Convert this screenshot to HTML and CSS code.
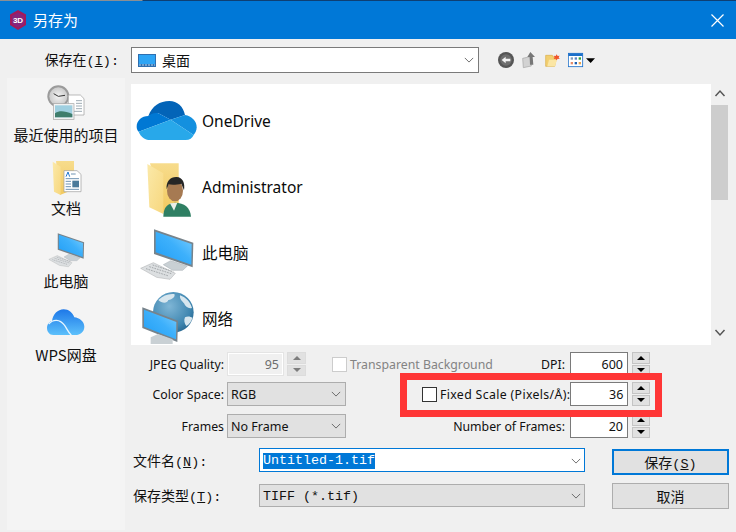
FILE: index.html
```html
<!DOCTYPE html>
<html lang="zh">
<head>
<meta charset="utf-8">
<title>另存为</title>
<link rel="stylesheet" href="styles.css">
</head>
<body>
<svg class="defs" width="0" height="0" aria-hidden="true">
  <defs>
    <linearGradient id="screen" x1="0" y1="1" x2="1" y2="0"><stop offset="0" stop-color="#1f9df5"/><stop offset=".55" stop-color="#3db0fb"/><stop offset="1" stop-color="#7fd0ff"/></linearGradient>
    <linearGradient id="folder" x1="0" y1="0" x2="0" y2="1"><stop offset="0" stop-color="#f7dc8c"/><stop offset="1" stop-color="#f2c95f"/></linearGradient>
    <linearGradient id="folderfront" x1="0" y1="0" x2="1" y2="1"><stop offset="0" stop-color="#fbe9a9"/><stop offset="1" stop-color="#f7d77e"/></linearGradient>
    <linearGradient id="wps" x1="0" y1="0" x2="0" y2="1"><stop offset="0" stop-color="#1e78e8"/><stop offset="1" stop-color="#5cc0fb"/></linearGradient>
    <radialGradient id="globe" cx=".4" cy=".35" r=".75"><stop offset="0" stop-color="#7fb6d6"/><stop offset=".7" stop-color="#3f86b0"/><stop offset="1" stop-color="#215f88"/></radialGradient>
    <radialGradient id="clockface" cx=".5" cy=".5" r=".6"><stop offset="0" stop-color="#f4f4f4"/><stop offset="1" stop-color="#c3c3c3"/></radialGradient>
    <g id="monitor">
      <polygon points="100,134 122,122 172,138 158,151 128,151" fill="#c9d0d4" stroke="#a3abb0" stroke-width="1.5"/>
      <polygon points="72,28 190,68 188,142 72,102" fill="#77838b"/>
      <polygon points="77,35 185,72 184,134 77,97" fill="url(#screen)"/>
      <polygon points="32,145 70,128 136,160 120,178 80,172" fill="#dcdfe1" stroke="#a6a9ab" stroke-width="1.5"/>
      <path d="M48 146 L116 168 M58 140 L124 161 M68 135 L130 155" stroke="#a4a8ab" stroke-width="3" stroke-dasharray="5 3" fill="none"/>
    </g>
  </defs>
</svg>

<div class="edge"></div>
<header class="titlebar">
  <svg class="app-icon" viewBox="0 0 18 20" aria-hidden="true">
    <polygon points="9,0 17,4.500 17,15 9,20 1,15 1,4.500" fill="#a3195b"/>
    <polygon points="9,2.500 15,6 15,14 9,17.500 3,14 3,6" fill="#86257c"/>
    <text x="9" y="13" class="app-icon-text" text-anchor="middle">3D</text>
  </svg>
  <span class="title-text">另存为</span>
  <svg class="close" viewBox="0 0 13 13" aria-hidden="true"><path d="M.5.5l12 12M12.500.5l-12 12" stroke="#fff" stroke-width="1.200" fill="none"/></svg>
</header>

<div class="toolbar">
  <label class="look-label">保存在<span class="mono">(<u>I</u>):</span></label>
  <div class="look-combo">
    <svg class="desk-icon" viewBox="0 0 18 13" aria-hidden="true"><rect width="18" height="13" fill="#2f6fb0"/><rect x="1" y="1" width="16" height="9" fill="#2ea5f5"/><path d="M1 11h16" stroke="#bcd9ee" stroke-dasharray="2 1"/></svg>
    <span class="look-text">桌面</span>
    <svg class="chev look-chev" viewBox="0 0 12 7" aria-hidden="true"><path d="M1 1l5 5 5-5" fill="none" stroke="#555" stroke-width="1"/></svg>
  </div>
  <div class="tools">
    <svg class="tool t-back" viewBox="174 150 51 54" aria-hidden="true">
      <circle cx="198" cy="177" r="24" fill="#555"/><circle cx="198" cy="177" r="17" fill="#6e6e6e"/>
      <path d="M185 177l12-10v6h14v8h-14v6z" fill="#f3f3f3"/>
    </svg>
    <svg class="tool t-up" viewBox="246 150 48 54" aria-hidden="true">
      <path d="M248 172l22-5 4 28-24 5z" fill="#d2d2d2" stroke="#a5a5a5" stroke-width="2"/>
      <path d="M271 153l14 15h-7l2 23h-10l-1-23h-7z" fill="#777"/>
    </svg>
    <svg class="tool t-new" viewBox="315 150 48 54" aria-hidden="true">
      <path d="M317 163h20l3 5h10l-6 28h-27z" fill="#f2cf70" stroke="#d9ad47" stroke-width="2"/>
      <path d="M322 196l5-20h24l-6 20z" fill="#fbe6a4"/>
      <path d="M350 160l3 5 6-1-3 5 3 5-6-1-3 5-3-5-6 1 3-5-3-5 6 1z" fill="#f0552b"/>
    </svg>
    <svg class="tool t-views" viewBox="384 150 84 54" aria-hidden="true">
      <rect x="385" y="157" width="43" height="40" fill="#fff" stroke="#1c6fc9" stroke-width="2.500"/>
      <rect x="385" y="157" width="43" height="8" fill="#1c6fc9"/>
      <rect x="392" y="169" width="7" height="7" fill="#7f9bbd"/><rect x="404" y="169" width="7" height="7" fill="#5a84c4"/><rect x="416" y="169" width="7" height="7" fill="#2ea043"/>
      <rect x="392" y="183" width="7" height="7" fill="#e58b6a"/><rect x="404" y="183" width="7" height="7" fill="#1c5fb0"/><rect x="416" y="183" width="7" height="7" fill="#eaa24b"/>
      <polygon points="438,172 465,172 452,186" fill="#000"/>
    </svg>
  </div>
</div>

<div class="workspace">
  <nav class="places">
    <div class="place">
      <svg class="place-icon" viewBox="21 234 354 141" aria-hidden="true">
        <circle cx="175" cy="289" r="33" fill="#9b9b9b"/><circle cx="175" cy="289" r="27" fill="url(#clockface)"/>
        <path d="M175 289l-14-8M175 289l20-3" stroke="#333" stroke-width="3" fill="none"/>
        <path d="M205 285h36l11 11v49h-47z" fill="#fff" stroke="#9a9a9a" stroke-width="2"/>
        <path d="M228 302h18M228 310h18M228 318h18M228 326h18M212 334h34" stroke="#8a9aa5" stroke-width="2.500"/>
        <rect x="160" y="311" width="62" height="47" fill="#f2f2f2" stroke="#a3a3a3" stroke-width="2"/>
        <rect x="165" y="316" width="52" height="36" fill="#9fcfe0"/>
        <path d="M165 340c15-10 30-6 52 2v10h-52z" fill="#3f7d6c"/>
      </svg>
      <span class="place-label">最近使用的项目</span>
    </div>
    <div class="place">
      <svg class="place-icon" viewBox="21 3 354 141" aria-hidden="true">
        <polygon points="168,33 222,33 222,118 180,135" fill="url(#folder)"/>
        <polygon points="158,35 182,50 182,135 162,125" fill="url(#folderfront)"/>
        <path d="M192 62h39l12 11v52h-51z" fill="#fff" stroke="#9b9b9b" stroke-width="2"/>
        <path d="M198 80l6-14 5 14" stroke="#1f76d0" stroke-width="3" fill="none"/>
        <path d="M213 72h14M197 86h40M197 94h16M197 102h16M197 110h16M197 118h40" stroke="#6f93b3" stroke-width="3"/>
        <rect x="217" y="92" width="20" height="20" fill="#4b7a9a"/>
      </svg>
      <span class="place-label">文档</span>
    </div>
    <div class="place">
      <svg class="place-icon" viewBox="21 225 354 141" aria-hidden="true">
        <use href="#monitor" transform="translate(125 234) scale(.67)"/>
      </svg>
      <span class="place-label">此电脑</span>
    </div>
    <div class="place">
      <svg class="place-icon" viewBox="21 444 354 141" aria-hidden="true">
        <path d="M160 555c-12 0-19-10-19-21 0-11 7-19 15-21 3-20 17-35 35-35 15 0 27 10 32 24 15 1 30 13 30 28 0 15-12 25-27 25z" fill="url(#wps)"/>
        <path d="M146 522c14-16 34-14 46 2 8 10 12 22 22 32" fill="none" stroke="#e8f6ff" stroke-width="4"/>
      </svg>
      <span class="place-label">WPS网盘</span>
    </div>
  </nav>

  <main class="pane">
    <div class="browser">
      <div class="list">
        <div class="item">
          <svg class="item-icon" viewBox="3 -6 213 198" aria-hidden="true">
            <path d="M55 78C66 48 90 33 118 33c24 0 42 16 47 42l-43 14-37-19z" fill="#0364b8"/>
            <path d="M55 78c-20 0-35 14-35 32 0 6 2 11 6 15l96-36-37-19c-10-3-20 0-30 8z" fill="#0078d4"/>
            <path d="M165 75c20 3 35 18 35 37 0 9-4 17-9 23l-69-46z" fill="#1490df"/>
            <path d="M26 125l96-36 69 46c-4 9-12 15-24 15H60c-16 0-28-10-34-25z" fill="#28a8ea"/>
          </svg>
          <span class="item-text">OneDrive</span>
        </div>
        <div class="item">
          <svg class="item-icon" viewBox="3 192 213 198" aria-hidden="true">
            <polygon points="60,220 146,220 146,340 100,368" fill="url(#folder)"/>
            <polygon points="52,222 100,250 100,372 58,352" fill="url(#folderfront)"/>
            <path d="M100 380c0-30 14-40 35-42 28 0 46 14 48 42z" fill="#2f7f63"/>
            <path d="M120 340l12 22 10-24z" fill="#e9efe9"/>
            <ellipse cx="135" cy="302" rx="24" ry="32" fill="#a67a52"/>
            <path d="M110 298c-3-24 12-38 30-37 18 1 26 18 22 40l-8-20c-14 4-30 4-38 2z" fill="#262626"/>
          </svg>
          <span class="item-text">Administrator</span>
        </div>
        <div class="item">
          <svg class="item-icon" viewBox="3 0 213 198" aria-hidden="true"><use href="#monitor"/></svg>
          <span class="item-text">此电脑</span>
        </div>
        <div class="item">
          <svg class="item-icon" viewBox="3 198 213 198" aria-hidden="true">
            <circle cx="130" cy="277" r="61" fill="url(#globe)"/>
            <path d="M85 240c14-14 30-20 48-18 4 8-6 16-18 18-4 12-20 10-30 0zM150 226c18 6 32 22 36 38-10 4-20-4-24-14-6-6-14-14-12-24zM165 292c8-4 18-2 22 2-2 10-10 20-18 24-6-6-8-18-4-26z" fill="#d7e6ee"/>
            <polygon points="37,262 144,302 142,366 37,324" fill="#77838b"/>
            <polygon points="42,269 139,306 138,358 42,320" fill="url(#screen)"/>
            <polygon points="62,352 84,342 128,358 128,372 62,372" fill="#c9d0d4"/>
          </svg>
          <span class="item-text">网络</span>
        </div>
      </div>
      <div class="scrollbar">
        <svg class="scroll-arrow" viewBox="0 0 12 8" aria-hidden="true"><path d="M1.500 7L6 2l4.500 5" fill="none" stroke="#555" stroke-width="1.500"/></svg>
        <div class="thumb"></div>
        <svg class="scroll-arrow scroll-down" viewBox="0 0 12 8" aria-hidden="true"><path d="M1.500 1L6 6l4.500-5" fill="none" stroke="#555" stroke-width="1.500"/></svg>
      </div>
    </div>

    <div class="options">
      <div class="opt-row row-a">
        <span class="opt-label">JPEG Quality:</span>
        <span class="field field-off q-field">95</span>
        <span class="spin spin-off q-spin"><span class="spin-btn"><i class="tri tri-up"></i></span><span class="spin-btn"><i class="tri tri-down"></i></span></span>
        <span class="check check-off"></span>
        <span class="check-text text-off">Transparent Background</span>
        <span class="right-label">DPI:</span>
        <span class="field num-field">600</span>
        <span class="spin"><span class="spin-btn"><i class="tri tri-up"></i></span><span class="spin-btn"><i class="tri tri-down"></i></span></span>
      </div>
      <div class="opt-row row-b">
        <span class="opt-label">Color Space:</span>
        <span class="select">RGB<svg class="chev" viewBox="0 0 12 7" aria-hidden="true"><path d="M1 1l5 5 5-5" fill="none" stroke="#555"/></svg></span>
        <span class="check check-on"></span>
        <span class="check-text">Fixed Scale (Pixels/Å):</span>
        <span class="field num-field">36</span>
        <span class="spin"><span class="spin-btn"><i class="tri tri-up"></i></span><span class="spin-btn"><i class="tri tri-down"></i></span></span>
      </div>
      <div class="opt-row row-c">
        <span class="opt-label">Frames</span>
        <span class="select">No Frame<svg class="chev" viewBox="0 0 12 7" aria-hidden="true"><path d="M1 1l5 5 5-5" fill="none" stroke="#555"/></svg></span>
        <span class="right-label">Number of Frames:</span>
        <span class="field num-field">20</span>
        <span class="spin"><span class="spin-btn"><i class="tri tri-up"></i></span><span class="spin-btn"><i class="tri tri-down"></i></span></span>
      </div>
      <div class="highlight"></div>
    </div>

    <div class="file-form">
      <label class="file-label">文件名<span class="mono">(<u>N</u>):</span></label>
      <div class="file-input"><span class="selected">Untitled-1.tif</span><svg class="chev" viewBox="0 0 12 7" aria-hidden="true"><path d="M1 1l5 5 5-5" fill="none" stroke="#555"/></svg></div>
      <button class="btn btn-default" type="button">保存<span class="mono">(<u>S</u>)</span></button>
      <label class="file-label">保存类型<span class="mono">(<u>T</u>):</span></label>
      <div class="type-select"><span class="type-text">TIFF (*.tif)</span><svg class="chev" viewBox="0 0 12 7" aria-hidden="true"><path d="M1 1l5 5 5-5" fill="none" stroke="#555"/></svg></div>
      <button class="btn btn-cancel" type="button">取消</button>
    </div>
  </main>
</div>
</body>
</html>
```

FILE: styles.css
```css
* { box-sizing: border-box; }

html, body {
  margin: 0;
  padding: 0;
}

body {
  width: 736px;
  height: 532px;
  overflow: hidden;
  background: #f0f0f0;
  color: #111;
  font-family: "Noto Sans", "Noto Sans CJK SC", sans-serif;
  font-size: 12.300px;
}

.defs { position: absolute; }

.edge {
  height: 1px;
  background: linear-gradient(90deg, #8a8f94 0, #8a8f94 142px, #0e3f73 143px, #0e3f73 100%);
}

.titlebar {
  height: 38px;
  background: #0078d7;
  display: flex;
  align-items: center;
  padding: 0 12px 0 9px;
  color: #fff;
}

.app-icon { width: 18px; height: 20px; flex: none; }
.app-icon-text { font: bold 8px "Liberation Sans", sans-serif; fill: #fff; }

.title-text {
  margin-left: 6px;
  font: 15px/20px "Noto Sans CJK SC", sans-serif;
}

.close { width: 13px; height: 13px; margin-left: auto; }

.toolbar {
  height: 39px;
  display: flex;
  align-items: center;
  padding-top: 8px;
  padding-bottom: 5px;
}

.look-label {
  width: 121px;
  text-align: right;
  padding-right: 2px;
  font: 14px/20px "Noto Sans CJK SC", sans-serif;
}

.mono { font-family: "Liberation Mono", monospace; font-size: 13.500px; }

.look-combo {
  width: 348px;
  height: 26px;
  margin-left: 10px;
  display: flex;
  align-items: center;
  background: #fff;
  border: 1px solid #7a7a7a;
  padding: 0 4px 0 6px;
}

.desk-icon { width: 18px; height: 13px; flex: none; }
.look-text { margin-left: 6px; font: 14px/20px "Noto Sans CJK SC", sans-serif; }
.look-chev { margin-left: auto; }

.chev { width: 10px; height: 6px; flex: none; }

.tools {
  margin-left: 19px;
  display: flex;
  gap: 7px;
  align-items: center;
}

.tool { height: 18px; flex: none; }
.t-back { width: 17px; }
.t-up { width: 16px; }
.t-new { width: 16px; }
.t-views { width: 28px; }

.workspace {
  display: flex;
  height: 454px;
}

.places {
  width: 118px;
  margin-left: 7px;
  height: 452px;
  background: #f4f4f4;
  display: flex;
  flex-direction: column;
  gap: 6.200px;
}

.place { display: flex; flex-direction: column; align-items: center; }
.place-icon { width: 118px; height: 47px; display: block; flex: none; }
.place-label { font: 15px/20px "Noto Sans CJK SC", "Noto Sans", sans-serif; white-space: nowrap; }

.pane {
  width: 605px;
  margin-left: 6px;
}

.browser {
  display: flex;
  height: 261px;
  margin-top: 6px;
  margin-right: 8px;
}

.list {
  width: 580px;
  background: #fff;
  overflow: hidden;
  padding-top: 4px;
  flex: none;
}

.item { display: flex; align-items: center; height: 66px; }
.item-icon { width: 71px; height: 66px; flex: none; display: block; }
.item-text { font: 15.500px/20px "Noto Sans", "Noto Sans CJK SC", sans-serif; color: #0a0a0a; }

.scrollbar {
  flex: 1;
  display: flex;
  flex-direction: column;
  align-items: center;
}

.scroll-arrow { width: 12px; height: 8px; margin-top: 5px; margin-bottom: 8px; flex: none; }
.thumb { width: 17px; height: 95px; background: #cdcdcd; }
.scroll-down { margin-top: auto; margin-bottom: 8px; }

.options {
  position: relative;
  margin-top: 7px;
  padding-right: 86px;
}

.opt-row {
  display: flex;
  align-items: center;
  height: 24px;
}

.row-a { margin-bottom: 6px; }
.row-b { margin-bottom: 8px; }

.opt-label {
  width: 93px;
  margin-right: 3px;
  text-align: right;
  white-space: nowrap;
  flex: none;
}

.right-label { margin-left: auto; margin-right: 5px; white-space: nowrap; }

.field {
  height: 24px;
  background: #fff;
  border: 1px solid #7a7a7a;
  display: flex;
  align-items: center;
  justify-content: flex-end;
  padding-right: 4px;
  font-size: 12.500px;
  flex: none;
}

.num-field { width: 58px; }
.q-field { width: 57px; }

.field-off {
  background: #f0f0f0;
  border-color: #e4e4e4;
  box-shadow: 0 0 0 1px #fff inset;
  color: #6d6d6d;
}

.spin {
  width: 18px;
  height: 24px;
  margin-left: 4px;
  display: flex;
  flex-direction: column;
  gap: 1px;
  flex: none;
}

.q-spin { margin-left: 3px; width: 19px; }

.spin-btn {
  flex: 1;
  background: #e1e1e1;
  border: 1px solid #c4c4c4;
  display: flex;
  align-items: center;
  justify-content: center;
}

.tri { width: 0; height: 0; border-left: 4px solid transparent; border-right: 4px solid transparent; }
.tri-up { border-bottom: 4px solid #000; }
.tri-down { border-top: 4px solid #000; }
.spin-off .spin-btn { border-color: #dcdcdc; }
.spin-off .tri-up { border-bottom-color: #7d7d7d; }
.spin-off .tri-down { border-top-color: #7d7d7d; }

.check {
  width: 15px;
  height: 15px;
  background: #fff;
  flex: none;
}

.check-off { margin-left: 26px; border: 1px solid #ccc; }
.check-on { margin-left: 76px; border: 1px solid #333; }

.check-text { margin-left: 3px; white-space: nowrap; }
.text-off { color: #838383; }
.row-b .check-text { flex: 1; letter-spacing: .35px; padding-top: 1px; }

.select {
  width: 119px;
  height: 24px;
  background: #e1e1e1;
  border: 1px solid #adadad;
  display: flex;
  align-items: center;
  justify-content: space-between;
  padding: 0 4px 0 3px;
  font-size: 12.500px;
  flex: none;
}

.highlight {
  position: absolute;
  left: 269px;
  top: 21px;
  width: 262px;
  height: 44px;
  border: 7px solid #ff3636;
  pointer-events: none;
}

.file-form {
  display: grid;
  grid-template-columns: 101px 326px 117px;
  column-gap: 27px;
  grid-template-rows: 35px 34px;
  margin-top: 10px;
}

.file-label {
  padding-left: 2px;
  font: 14px/24px "Noto Sans CJK SC", sans-serif;
  white-space: nowrap;
}

.file-input {
  height: 24px;
  background: #fff;
  border: 1px solid #0078d7;
  display: flex;
  align-items: center;
  justify-content: space-between;
  padding: 1px 3px 0 3px;
  font: 13.330px "Liberation Mono", monospace;
}

.selected { background: #0078d7; color: #fff; line-height: 16px; }

.type-select {
  height: 23px;
  margin-top: 1px;
  background: #e1e1e1;
  border: 1px solid #adadad;
  display: flex;
  align-items: center;
  justify-content: space-between;
  padding: 0 3px 0 3px;
  font: 13.330px "Liberation Mono", monospace;
}

.type-text { padding-top: 1px; }

.btn {
  width: 117px;
  height: 26px;
  padding: 0;
  background: #e1e1e1;
  border: 1px solid #adadad;
  color: #111;
  font: 14px "Noto Sans CJK SC", sans-serif;
}

.btn-default { margin-top: 1px; border: 2px solid #0078d7; }
```
